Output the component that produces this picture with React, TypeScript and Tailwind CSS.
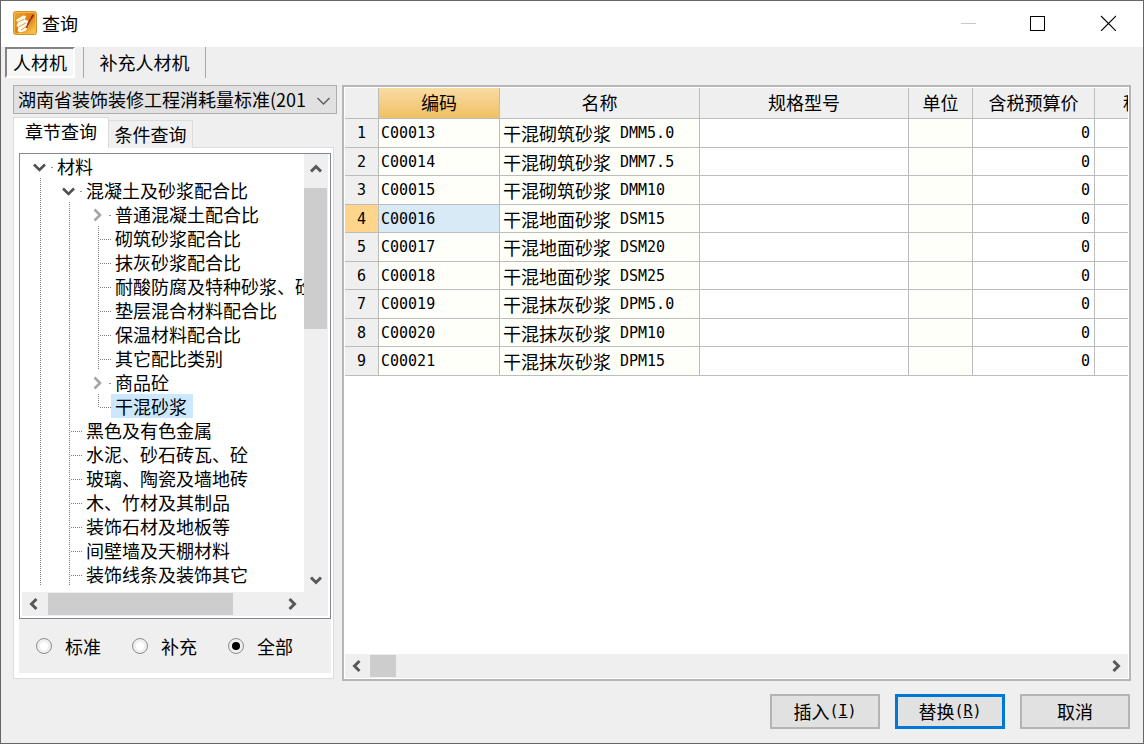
import React, { useState } from "react";

type Cell = "blank" | "line" | "branch" | "corner" | "open" | "closed";
type Node = { label: string; cells: Cell[] };

const tree: Node[] = [
  { label: "材料", cells: ["open"] },
  { label: "混凝土及砂浆配合比", cells: ["line", "open"] },
  { label: "普通混凝土配合比", cells: ["line", "line", "closed"] },
  { label: "砌筑砂浆配合比", cells: ["line", "line", "branch"] },
  { label: "抹灰砂浆配合比", cells: ["line", "line", "branch"] },
  { label: "耐酸防腐及特种砂浆、砼", cells: ["line", "line", "branch"] },
  { label: "垫层混合材料配合比", cells: ["line", "line", "branch"] },
  { label: "保温材料配合比", cells: ["line", "line", "branch"] },
  { label: "其它配比类别", cells: ["line", "line", "branch"] },
  { label: "商品砼", cells: ["line", "line", "closed"] },
  { label: "干混砂浆", cells: ["line", "line", "corner"] },
  { label: "黑色及有色金属", cells: ["line", "branch"] },
  { label: "水泥、砂石砖瓦、砼", cells: ["line", "branch"] },
  { label: "玻璃、陶瓷及墙地砖", cells: ["line", "branch"] },
  { label: "木、竹材及其制品", cells: ["line", "branch"] },
  { label: "装饰石材及地板等", cells: ["line", "branch"] },
  { label: "间壁墙及天棚材料", cells: ["line", "branch"] },
  { label: "装饰线条及装饰其它", cells: ["line", "branch"] },
];

const rows = [
  ["C00013", "干混砌筑砂浆", "DMM5.0"],
  ["C00014", "干混砌筑砂浆", "DMM7.5"],
  ["C00015", "干混砌筑砂浆", "DMM10"],
  ["C00016", "干混地面砂浆", "DSM15"],
  ["C00017", "干混地面砂浆", "DSM20"],
  ["C00018", "干混地面砂浆", "DSM25"],
  ["C00019", "干混抹灰砂浆", "DPM5.0"],
  ["C00020", "干混抹灰砂浆", "DPM10"],
  ["C00021", "干混抹灰砂浆", "DPM15"],
];

const mono = "font-['DejaVu_Sans_Mono','Noto_Sans_CJK_SC',monospace] text-[15px] leading-5";

function TreeCell({ kind }: { kind: Cell }) {
  const dots = { stroke: "#808080", strokeWidth: 1, strokeDasharray: "1 1" };
  return (
    <svg className="h-6 w-[29px] shrink-0" viewBox="0 0 29 24" fill="none" aria-hidden="true">
      {(kind === "line" || kind === "branch") && <path d="M16.5 0V24" {...dots} />}
      {kind === "corner" && <path d="M16.5 0V13" {...dots} />}
      {(kind === "branch" || kind === "corner") && <path d="M18 13.5H29" {...dots} />}
      {kind === "open" && <path d="M10 10.5L15.5 16L21 10.5" stroke="#505050" strokeWidth="2.6" />}
      {kind === "closed" && <path d="M12.5 7.5L18 13L12.5 18.5" stroke="#a6a6a6" strokeWidth="2.6" />}
      {(kind === "open" || kind === "closed") && <path d="M27 13.5H29" stroke="#909090" />}
    </svg>
  );
}

function Arrow({ dir }: { dir: "up" | "down" | "left" | "right" }) {
  const d = {
    up: "M7 14.5L12 9.5L17 14.5",
    down: "M7 9.5L12 14.5L17 9.5",
    left: "M14.5 7L9.5 12L14.5 17",
    right: "M9.5 7L14.5 12L9.5 17",
  }[dir];
  return (
    <button type="button" aria-label={dir} className="block size-6 shrink-0">
      <svg className="size-6" viewBox="0 0 24 24" fill="none">
        <path d={d} stroke="#585858" strokeWidth="3" />
      </svg>
    </button>
  );
}

function TitleBar() {
  return (
    <header className="flex h-[46px] items-center bg-white pb-0.5 pl-3">
      <svg className="size-6" viewBox="0 0 24 24" aria-hidden="true">
        <defs>
          <linearGradient id="gold" x1="0" y1="0" x2="1" y2="1">
            <stop offset="0" stopColor="#eda02c" />
            <stop offset="0.5" stopColor="#dd7d18" />
            <stop offset="1" stopColor="#fbd04a" />
          </linearGradient>
        </defs>
        <rect x="0.5" y="0.5" width="23" height="23" rx="2" fill="#f4b93f" stroke="#cf9233" />
        <rect x="2" y="2" width="20" height="20" rx="1" fill="url(#gold)" />
        <path d="M3 9L10 4.5L13 5L12 8.5L15.5 10L14 13L16 14.5L12.5 20L7 21.5L4.5 20L5.5 16.5L3.5 14.5L5 11.5Z" fill="#fff9ea" />
        <path d="M5 11L11.5 8M6 15.5L13 12M8 19L13.5 15.5" stroke="#e6a04a" strokeWidth="1" />
        <path d="M20.5 4L16 11L13.5 17" fill="none" stroke="#a5351b" strokeWidth="1.8" />
        <path d="M20 4L18 7" stroke="#7a2010" strokeWidth="1" />
      </svg>
      <h1 className="ml-[5px] flex-1 text-lg">查询</h1>
      <button type="button" aria-label="最小化" disabled className="flex h-full w-[70px] items-center justify-center">
        <svg className="size-4" viewBox="0 0 16 16"><path d="M1 8.5H16" stroke="#c8c8c8" /></svg>
      </button>
      <button type="button" aria-label="最大化" className="flex h-full w-[70px] items-center justify-center">
        <svg className="size-4" viewBox="0 0 16 16"><rect x="0.5" y="1.5" width="14" height="14" fill="none" stroke="#000" /></svg>
      </button>
      <button type="button" aria-label="关闭" className="flex h-full w-[70px] items-center justify-center">
        <svg className="size-4" viewBox="0 0 16 16"><path d="M1 1L16 16M16 1L1 16" stroke="#000" strokeWidth="1.1" /></svg>
      </button>
    </header>
  );
}

function TreePanel() {
  const [selected, setSelected] = useState("干混砂浆");
  return (
    <div className="flex flex-1 flex-col border border-[#828790] bg-white p-0.5 pt-0">
      <div className="flex flex-1">
        <ul role="tree" className="w-0 flex-1 overflow-hidden pl-[2px]">
          {tree.map((n) => (
            <li key={n.label} role="treeitem" aria-selected={n.label === selected} className="flex h-6 items-center">
              {n.cells.map((c, i) => (
                <TreeCell key={i} kind={c} />
              ))}
              <button
                type="button"
                onClick={() => setSelected(n.label)}
                className={`h-6 shrink-0 whitespace-nowrap pr-1.5 pl-1 leading-6 ${n.label === selected ? "bg-[#cce8ff]" : ""}`}
              >
                {n.label}
              </button>
            </li>
          ))}
        </ul>
        <div className="flex w-6 flex-col bg-[#efefef] pt-[3px]">
          <Arrow dir="up" />
          <div className="mt-[7px] h-[141px] w-[23px] bg-[#cdcdcd]" />
          <div className="flex-1" />
          <Arrow dir="down" />
        </div>
      </div>
      <div className="flex h-6 items-center bg-[#efefef] pr-6">
        <Arrow dir="left" />
        <div className="ml-[2px] h-[22px] w-[185px] bg-[#cdcdcd]" />
        <div className="flex-1" />
        <Arrow dir="right" />
      </div>
    </div>
  );
}

function Sidebar() {
  const [scope, setScope] = useState("全部");
  return (
    <aside className="flex w-[324px] shrink-0 flex-col">
      <div className="relative">
        <select
          aria-label="定额标准"
          className="block h-[29px] w-full appearance-none border border-[#adadad] bg-[#e1e1e1] pr-7 pb-0.5 pl-1 text-lg leading-6"
        >
          <option>湖南省装饰装修工程消耗量标准(201</option>
        </select>
        <svg className="pointer-events-none absolute top-2 right-1.5 size-4" viewBox="0 0 16 16" fill="none">
          <path d="M2.5 5L8.5 11L14.5 5" stroke="#606060" strokeWidth="1.5" />
        </svg>
      </div>
      <div role="tablist" className="mt-[3px] mr-[3px] flex items-end">
        <button type="button" role="tab" aria-selected="true" className="h-[31px] w-24 border border-b-0 border-[#dcdcdc] bg-white pb-1 text-lg leading-6">
          章节查询
        </button>
        <button type="button" role="tab" aria-selected="false" className="h-7 w-[84px] border border-b-0 border-l-0 border-[#dcdcdc] bg-[#f0f0f0] pb-0.5 text-lg leading-6">
          条件查询
        </button>
        <span className="flex-1 border-b border-[#dcdcdc]" />
      </div>
      <div className="mr-[3px] flex flex-1 flex-col border border-t-0 border-[#dcdcdc] bg-white pt-[5px] pr-0.5 pb-[5px] pl-[5px]">
        <TreePanel />
        <div className="flex h-[54px] items-center bg-[#efefef] pl-[17px]">
          {["标准", "补充", "全部"].map((s) => (
            <label key={s} className="flex w-24 items-center gap-[13px]">
              <input
                type="radio"
                name="scope"
                checked={scope === s}
                onChange={() => setScope(s)}
                className="size-4 appearance-none rounded-full border border-[#8c8c8c] bg-white bg-clip-content p-[3px] checked:bg-black"
              />
              {s}
            </label>
          ))}
        </div>
      </div>
    </aside>
  );
}

const th = "border-r border-b border-[#bcbcbc] bg-[#efefef] p-0 pb-0.5 font-normal";
const td = "border-r border-b border-[#bcbcbc] p-0";

function DataTable() {
  const [active, setActive] = useState(3);
  return (
    <section className="flex min-w-0 flex-1 flex-col border-2 border-[#b4b6ba] bg-white p-px">
      <div className="w-full flex-1 overflow-hidden">
        <table className="w-max table-fixed border-separate border-spacing-0 leading-6">
          <colgroup>
            <col className="w-[34px]" />
            <col className="w-[121px]" />
            <col className="w-[200px]" />
            <col className="w-[209px]" />
            <col className="w-16" />
            <col className="w-[122px]" />
            <col className="w-24" />
          </colgroup>
          <thead>
            <tr className="h-[31px]">
              <th className={th} aria-label="序号" />
              <th className="border-r border-b border-[#bcbcbc] bg-linear-to-b from-[#fadba4] to-[#f0c061] p-0 pb-0.5 font-normal">编码</th>
              <th className={th}>名称</th>
              <th className={th}>规格型号</th>
              <th className={th}>单位</th>
              <th className={th}>含税预算价</th>
              <th className={th}><span className="flex pl-7">税</span></th>
            </tr>
          </thead>
          <tbody>
            {rows.map(([code, name, spec], i) => (
              <tr key={code} onClick={() => setActive(i)} className="h-[29px] even:h-7">
                <th className={`border-r border-b border-[#bcbcbc] p-0 font-normal ${mono} ${i === active ? "bg-[#ffd48b]" : "bg-[#efefef]"}`}>{i + 1}</th>
                <td className={`${td} ${mono} ${i === active ? "bg-[#d9eaf7]" : "bg-[#fffffa]"}`}><span className="flex pl-[2px]">{code}</span></td>
                <td className={`${td} bg-[#fffffa] whitespace-nowrap`}>
                  <div className="flex items-center gap-[9px] pl-[3px]">
                    <span>{name}</span>
                    <span className={mono}>{spec}</span>
                  </div>
                </td>
                <td className={td} />
                <td className={`${td} bg-[#fffffa]`} />
                <td className={`${td} ${mono}`}><span className="flex justify-end pr-1">0</span></td>
                <td className={td} />
              </tr>
            ))}
          </tbody>
        </table>
      </div>
      <div className="flex h-6 items-center bg-[#efefef]">
        <Arrow dir="left" />
        <div className="ml-px h-[22px] w-[26px] bg-[#cdcdcd]" />
        <div className="flex-1" />
        <Arrow dir="right" />
      </div>
    </section>
  );
}

export default function App() {
  return (
    <div className="flex min-h-screen flex-col border border-[#666] bg-[#efefef] font-['Noto_Sans_CJK_SC','Noto_Sans',sans-serif] text-lg leading-6 text-black">
      <TitleBar />
      <nav className="flex h-[31px] items-stretch pl-1" role="tablist">
        <button type="button" role="tab" aria-selected="true" className="w-[70px] border-2 border-t-[#848484] border-r-white border-b-white border-l-[#848484] bg-[#f7f7f7] pb-0.5 text-center leading-6 whitespace-nowrap">
          人材机
        </button>
        <span className="ml-2 w-px bg-[#a8a8a8]" />
        <button type="button" role="tab" aria-selected="false" className="w-[121px] pb-0.5 leading-6">
          补充人材机
        </button>
        <span className="w-px bg-[#a8a8a8]" />
      </nav>
      <main className="flex flex-1 gap-[5px] pt-[7px] pr-3 pl-3">
        <div className="flex pb-[2px]">
          <Sidebar />
        </div>
        <DataTable />
      </main>
      <footer className="flex justify-end gap-[15px] pt-[13px] pr-[13px] pb-[14px]">
        <button type="button" className="flex h-[35px] w-[110px] items-center justify-center border-2 border-[#b4b4b4] bg-[#e1e1e1] pb-0.5">
          插入<span className={mono}>(<u>I</u>)</span>
        </button>
        <button type="button" className="flex h-[35px] w-[110px] items-center justify-center border-[3px] border-[#0078d7] bg-[#e1e1e1] pb-0.5">
          替换<span className={mono}>(<u>R</u>)</span>
        </button>
        <button type="button" className="flex h-[35px] w-[110px] items-center justify-center border-2 border-[#b4b4b4] bg-[#e1e1e1] pb-0.5">
          取消
        </button>
      </footer>
    </div>
  );
}
